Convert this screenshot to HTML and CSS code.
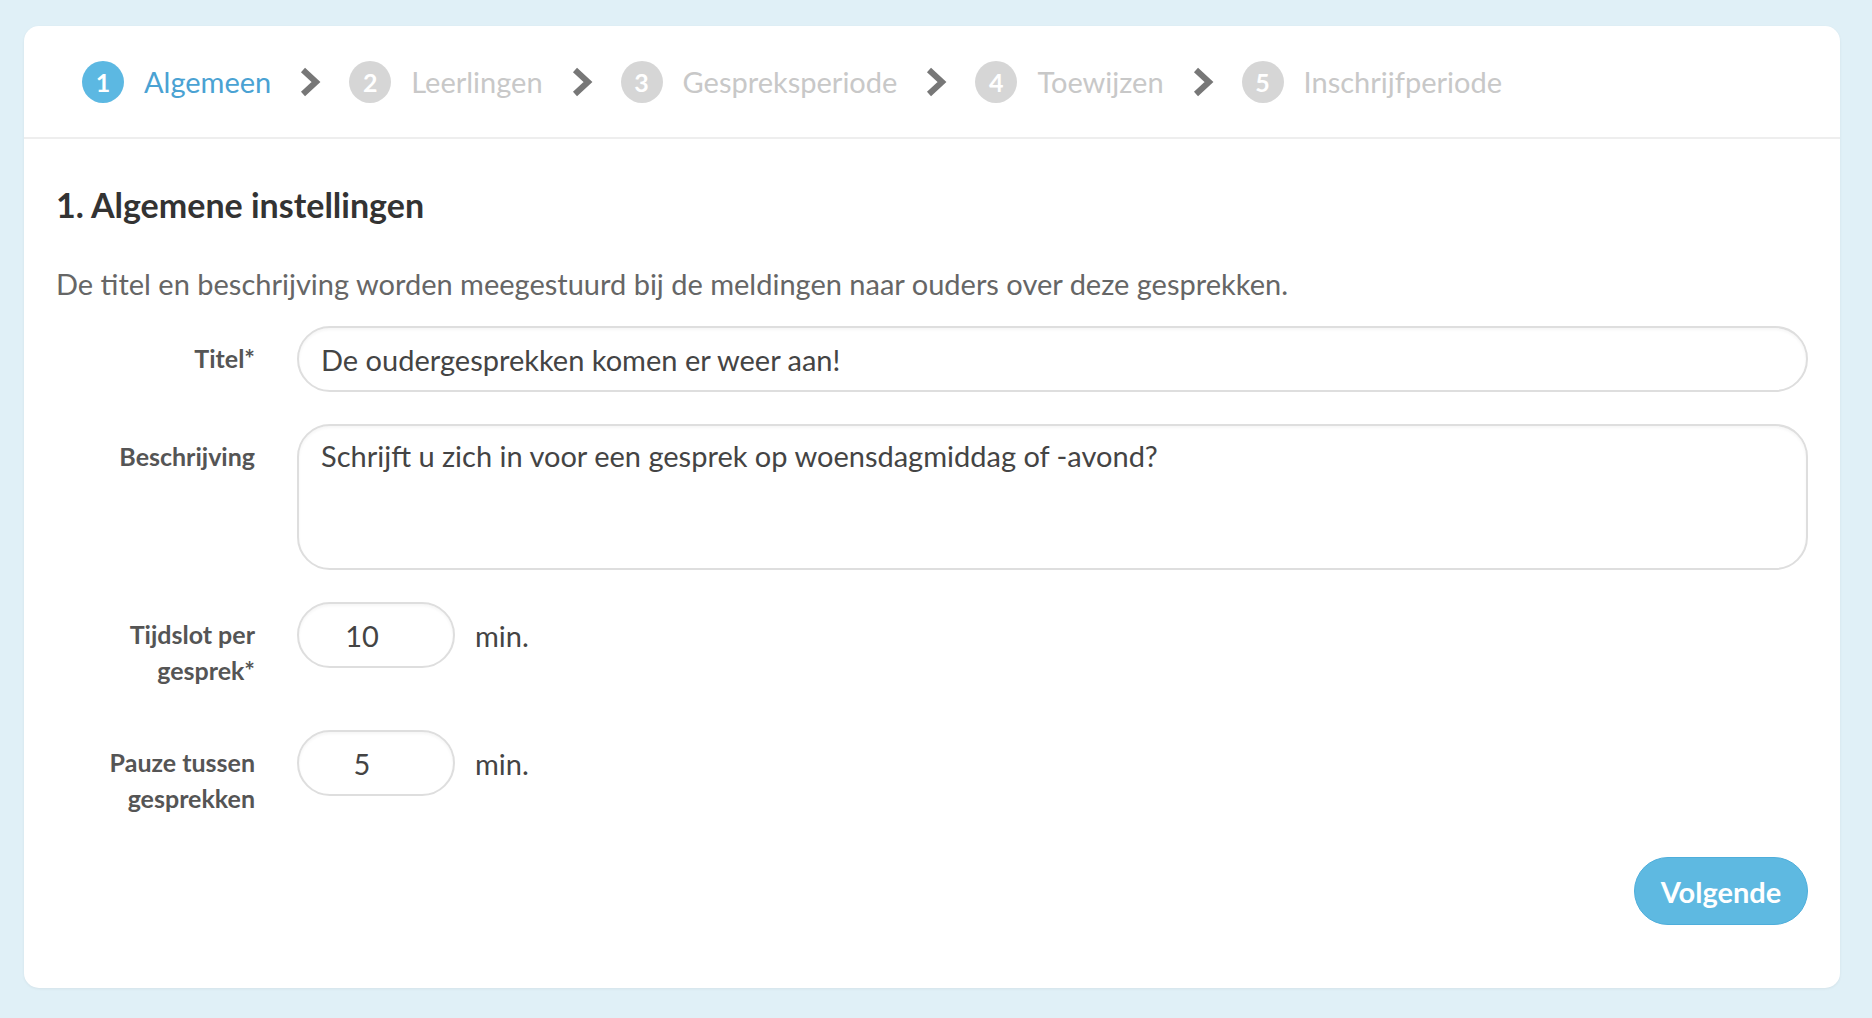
FILE: index.html
```html
<!DOCTYPE html>
<html lang="nl">
<head>
  <meta charset="utf-8">
  <title>Oudergesprekken - Algemeen</title>
  <link rel="stylesheet" href="styles.css">
</head>
<body>
  <section class="card">
    <!-- stappen -->
    <nav class="steps">
      <div class="step active"><span class="num">1</span><span class="name">Algemeen</span></div>
      <svg class="chev" viewBox="0 0 22 30"><polyline points="4,3 17,15 4,27" /></svg>
      <div class="step"><span class="num">2</span><span class="name">Leerlingen</span></div>
      <svg class="chev" viewBox="0 0 22 30"><polyline points="4,3 17,15 4,27" /></svg>
      <div class="step"><span class="num">3</span><span class="name">Gespreksperiode</span></div>
      <svg class="chev" viewBox="0 0 22 30"><polyline points="4,3 17,15 4,27" /></svg>
      <div class="step"><span class="num">4</span><span class="name">Toewijzen</span></div>
      <svg class="chev" viewBox="0 0 22 30"><polyline points="4,3 17,15 4,27" /></svg>
      <div class="step"><span class="num">5</span><span class="name">Inschrijfperiode</span></div>
    </nav>

    <div class="content">
      <h2>1. Algemene instellingen</h2>
      <p class="intro">De titel en beschrijving worden meegestuurd bij de meldingen naar ouders over deze gesprekken.</p>

      <form class="form">
        <div class="row">
          <label class="label">Titel*</label>
          <input class="input wide" type="text" value="De oudergesprekken komen er weer aan!">
        </div>
        <div class="row">
          <label class="label">Beschrijving</label>
          <textarea class="input area">Schrijft u zich in voor een gesprek op woensdagmiddag of -avond?</textarea>
        </div>
        <div class="row">
          <label class="label">Tijdslot per gesprek*</label>
          <div class="inline">
            <input class="input small" type="text" value="10">
            <span class="unit">min.</span>
          </div>
        </div>
        <div class="row">
          <label class="label">Pauze tussen gesprekken</label>
          <div class="inline">
            <input class="input small" type="text" value="5">
            <span class="unit">min.</span>
          </div>
        </div>
        <div class="actions">
          <button type="button" class="btn">Volgende</button>
        </div>
      </form>
    </div>
  </section>
</body>
</html>
```

FILE: styles.css
```css
body {
  margin: 0;
  padding: 26px 32px 31px 24px;
  background-color: #e0f0f7;
  font-family: Lato, "Open Sans", sans-serif;
  color: #444;
}

.card {
  background-color: #ffffff;
  border-radius: 15px;
  box-shadow: 0 1px 3px rgba(0, 0, 0, 0.06);
}

/* stappen bovenaan */
.steps {
  display: flex;
  align-items: center;
  gap: 28px;
  height: 111px;
  padding-left: 58px;
  border-bottom: 2px solid #eeeeee;
}

.step {
  display: flex;
  align-items: center;
  gap: 20px;
}

.step .num {
  display: flex;
  align-items: center;
  justify-content: center;
  width: 42px;
  height: 42px;
  border-radius: 50%;
  background-color: #d6d6d6;
  color: #ffffff;
  font-size: 25px;
  font-weight: 700;
}

.step .name {
  font-size: 29px;
  color: #c8c8c8;
}

.step.active .num {
  background-color: #5cb8e2;
}

.step.active .name {
  color: #4aa2d3;
}

.chev {
  width: 22px;
  height: 30px;
}

.chev polyline {
  fill: none;
  stroke: #777777;
  stroke-width: 6;
}

/* inhoud */
.content {
  padding: 48px 32px 63px 32px;
}

h2 {
  margin: 0 0 44px 0;
  font-size: 34px;
  line-height: 36px;
  font-weight: 700;
  color: #333;
}

.intro {
  margin: 0 0 25px 0;
  font-size: 29px;
  line-height: 34px;
  color: #666;
}

.row {
  display: flex;
  align-items: flex-start;
  margin-bottom: 32px;
}

.label {
  flex: 0 0 199px;
  margin-right: 42px;
  padding: 14px 0 10px 0;
  text-align: right;
  font-size: 25px;
  line-height: 36px;
  font-weight: 700;
  color: #555;
}

.input {
  box-sizing: border-box;
  height: 66px;
  border: 2px solid #dedede;
  border-radius: 33px;
  box-shadow: inset 0 2px 3px rgba(0, 0, 0, 0.04);
  font-family: Lato, "Open Sans", sans-serif;
  font-size: 29px;
  color: #444;
  background-color: #fff;
  outline: none;
}

.wide {
  flex: 1;
  padding: 0 22px;
}

.area {
  flex: 1;
  height: 146px;
  padding: 13px 22px;
  line-height: 1.2;
  resize: none;
}

.inline {
  display: flex;
  align-items: center;
  gap: 20px;
}

.small {
  width: 158px;
  padding: 0 48px 0 20px;
  text-align: center;
}

.unit {
  font-size: 29px;
  color: #444;
}

.actions {
  display: flex;
  justify-content: flex-end;
  margin-top: -1px;
}

.btn {
  width: 174px;
  height: 68px;
  border: 1px solid #4eaedb;
  border-radius: 34px;
  background-color: #5eb9e1;
  color: #ffffff;
  font-family: Lato, "Open Sans", sans-serif;
  font-size: 29px;
  font-weight: 700;
  cursor: pointer;
}
```
